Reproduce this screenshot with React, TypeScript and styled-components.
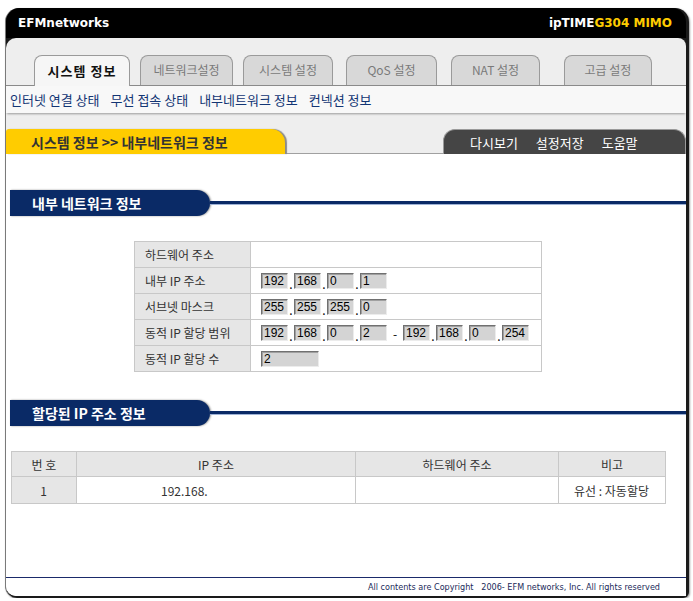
import React from "react"
import styled, { createGlobalStyle } from "styled-components"

const GlobalStyle = createGlobalStyle`
  body {
    margin: 0;
    background: #ffffff;
    font-family: "Noto Sans CJK KR", "Liberation Sans", sans-serif;
  }
`

const Frame = styled.div`
  width: 680px;
  margin: 8px 0 0 5px;
  background: #1a1a1a;
  border-left: 1px solid #7a7a7a;
  padding: 0 3px 2px 0;
  border-radius: 14px 14px 6px 12px;
  box-shadow: 1px 1px 2px #9a9a9a;
`

const Header = styled.div`
  height: 30px;
  display: flex;
  align-items: center;
  justify-content: space-between;
  padding: 0 14px 0 12px;
  background: #000;
  border-radius: 14px 14px 0 0;
  font-family: "DejaVu Sans", Verdana, sans-serif;
  font-weight: bold;
  font-size: 12px;
  color: #fff;
`

const Model = styled.span`
  color: #ffcc00;
`

const Inner = styled.div`
  background: #eeeeee;
  border-radius: 10px 8px 0 10px;
  overflow: hidden;
`

const TabRow = styled.div`
  height: 47px;
  display: flex;
  align-items: flex-end;
  position: relative;
  z-index: 1;
`

const Tab = styled.div<{ $w: number; $gap: number; $active?: boolean }>`
  width: ${(p) => p.$w}px;
  margin-left: ${(p) => p.$gap}px;
  height: ${(p) => (p.$active ? 31 : 30)}px;
  margin-bottom: ${(p) => (p.$active ? -1 : 0)}px;
  box-sizing: border-box;
  border: 1px solid #9a9a9a;
  border-bottom: none;
  border-radius: 8px 8px 0 0;
  background: ${(p) => (p.$active ? "#f6f6f6" : "#d8d8d8")};
  color: ${(p) => (p.$active ? "#111" : "#7a7a7a")};
  font-weight: ${(p) => (p.$active ? "bold" : "normal")};
  font-size: ${(p) => (p.$active ? 13 : 12)}px;
  letter-spacing: ${(p) => (p.$active ? 1 : 0)}px;
  display: flex;
  align-items: center;
  justify-content: center;
  padding-bottom: 2px;
`

const SubBar = styled.div`
  height: 28px;
  box-sizing: border-box;
  background: #f8f8f8;
  border-top: 1px solid #8a8a8a;
  box-shadow: 0 2px 2px -1px #9a9a9a;
  display: flex;
  align-items: center;
  gap: 11px;
  padding-left: 4px;
`

const SubLink = styled.span`
  color: #123574;
  font-size: 13px;
`

const TitleRow = styled.div`
  margin-top: 15px;
  height: 25px;
  display: flex;
  align-items: flex-end;
  justify-content: space-between;
  border-bottom: 1px solid #a0a0a0;
`

const CrumbTab = styled.div`
  width: 279px;
  height: 25px;
  margin-bottom: -1px;
  box-sizing: border-box;
  background: #ffcc00;
  border-radius: 3px 14px 0 0;
  box-shadow: 2px 0 1px #8a8a8a;
  padding-left: 25px;
  display: flex;
  align-items: center;
  font-weight: bold;
  font-size: 14px;
  color: #333;
`

const ToolTab = styled.div`
  width: 243px;
  height: 25px;
  margin-bottom: -1px;
  box-sizing: border-box;
  background: #454545;
  border: 1px solid #9a9a9a;
  border-bottom: none;
  border-radius: 12px 12px 0 0;
  padding-left: 26px;
  display: flex;
  align-items: center;
  gap: 18px;
  color: #fff;
  font-size: 13px;
`

const Content = styled.div`
  background: #fff;
  height: 442px;
  display: flex;
  flex-direction: column;
`

const SectionHead = styled.div<{ $top: number }>`
  margin-top: ${(p) => p.$top}px;
  margin-left: 4px;
  display: flex;
  align-items: center;
`

const Pill = styled.div`
  width: 200px;
  height: 26px;
  box-sizing: border-box;
  background: #0a2a66;
  border-radius: 0 13px 13px 0;
  box-shadow: 1px 0 2px rgba(0, 0, 0, 0.45);
  padding-left: 22px;
  display: flex;
  align-items: center;
  color: #fff;
  font-weight: bold;
  font-size: 14px;
`

const Rule = styled.div`
  flex: 1;
  height: 3px;
  background: #0a2a66;
  border-bottom: 1px solid #9fb3d6;
`

const InfoTable = styled.table`
  margin: 25px 0 0 128px;
  width: 408px;
  border-collapse: collapse;
  font-size: 12px;
  color: #333;
  td {
    border: 1px solid #c8c8c8;
    height: 25px;
    padding: 0 0 0 10px;
  }
`

const LabelCell = styled.td`
  width: 105px;
  background: #e6e6e6;
`

const IpRow = styled.div`
  display: flex;
  align-items: flex-end;
`

const IpBox = styled.input<{ $w?: number }>`
  width: ${(p) => p.$w ?? 27}px;
  height: 16px;
  box-sizing: border-box;
  margin: 0;
  padding: 0 0 0 2px;
  background: #d4d4d4;
  border: 1px solid;
  border-color: #707070 #ececec #ececec #707070;
  box-shadow: inset 1px 1px 0 #a0a0a0;
  font-family: "Liberation Sans", sans-serif;
  font-size: 12px;
  line-height: 14px;
  color: #000;
  outline: none;
`

const Dot = styled.span`
  width: 6px;
  text-align: center;
  font-size: 12px;
  line-height: 10px;
  color: #000;
`

const Dash = styled.span`
  width: 16px;
  text-align: center;
  font-size: 12px;
  line-height: 14px;
  color: #000;
`

const ListTable = styled.table`
  margin: 25px 0 0 5px;
  width: 654px;
  table-layout: fixed;
  border-collapse: collapse;
  font-size: 12px;
  color: #333;
  th {
    background: #e6e6e6;
    font-weight: normal;
    height: 22px;
    border: 1px solid #c8c8c8;
  }
  td {
    height: 24px;
    border: 1px solid #c8c8c8;
  }
`

const Col = styled.col<{ $w: number }>`
  width: ${(p) => p.$w}px;
`

const Cell = styled.td<{ $align?: string; $pad?: number; $shade?: boolean }>`
  text-align: ${(p) => p.$align ?? "center"};
  padding-left: ${(p) => p.$pad ?? 0}px;
  background: ${(p) => (p.$shade ? "#e6e6e6" : "#fff")};
`

const Footer = styled.div`
  margin-top: auto;
  height: 18px;
  border-top: 1px solid #1a2a6a;
  display: flex;
  align-items: center;
  justify-content: flex-end;
  padding-right: 26px;
  font-family: "DejaVu Sans", Verdana, sans-serif;
  font-size: 8.1px;
  color: #1a2a5a;
  white-space: pre;
`

const tabs = [
  { label: "시스템 정보", w: 96, gap: 28, active: true },
  { label: "네트워크설정", w: 93, gap: 10 },
  { label: "시스템 설정", w: 90, gap: 10 },
  { label: "QoS 설정", w: 91, gap: 13 },
  { label: "NAT 설정", w: 89, gap: 14 },
  { label: "고급 설정", w: 88, gap: 24 },
]

const subLinks = ["인터넷 연결 상태", "무선 접속 상태", "내부네트워크 정보", "컨넥션 정보"]

const Ip = ({ parts }: { parts: string[] }) => (
  <>
    {parts.map((v, i) => (
      <React.Fragment key={i}>
        {i > 0 && <Dot>.</Dot>}
        <IpBox readOnly value={v} />
      </React.Fragment>
    ))}
  </>
)

export default function App() {
  return (
    <>
      <GlobalStyle />
      <Frame>
        <Header>
          <span>EFMnetworks</span>
          <span>
            ipTIME<Model>G304 MIMO</Model>
          </span>
        </Header>
        <Inner>
          <TabRow>
            {tabs.map((t) => (
              <Tab key={t.label} $w={t.w} $gap={t.gap} $active={t.active}>
                {t.label}
              </Tab>
            ))}
          </TabRow>
          <SubBar>
            {subLinks.map((l) => (
              <SubLink key={l}>{l}</SubLink>
            ))}
          </SubBar>
          <TitleRow>
            <CrumbTab>시스템 정보 &gt;&gt; 내부네트워크 정보</CrumbTab>
            <ToolTab>
              <span>다시보기</span>
              <span>설정저장</span>
              <span>도움말</span>
            </ToolTab>
          </TitleRow>
          <Content>
            <SectionHead $top={36}>
              <Pill>내부 네트워크 정보</Pill>
              <Rule />
            </SectionHead>
            <InfoTable>
              <tbody>
                <tr>
                  <LabelCell>하드웨어 주소</LabelCell>
                  <td></td>
                </tr>
                <tr>
                  <LabelCell>내부 IP 주소</LabelCell>
                  <td>
                    <IpRow>
                      <Ip parts={["192", "168", "0", "1"]} />
                    </IpRow>
                  </td>
                </tr>
                <tr>
                  <LabelCell>서브넷 마스크</LabelCell>
                  <td>
                    <IpRow>
                      <Ip parts={["255", "255", "255", "0"]} />
                    </IpRow>
                  </td>
                </tr>
                <tr>
                  <LabelCell>동적 IP 할당 범위</LabelCell>
                  <td>
                    <IpRow>
                      <Ip parts={["192", "168", "0", "2"]} />
                      <Dash>-</Dash>
                      <Ip parts={["192", "168", "0", "254"]} />
                    </IpRow>
                  </td>
                </tr>
                <tr>
                  <LabelCell>동적 IP 할당 수</LabelCell>
                  <td>
                    <IpRow>
                      <IpBox $w={58} readOnly value="2" />
                    </IpRow>
                  </td>
                </tr>
              </tbody>
            </InfoTable>
            <SectionHead $top={28}>
              <Pill>할당된 IP 주소 정보</Pill>
              <Rule />
            </SectionHead>
            <ListTable>
              <colgroup>
                <Col $w={65} />
                <Col $w={279} />
                <Col $w={203} />
                <Col $w={107} />
              </colgroup>
              <thead>
                <tr>
                  <th>번 호</th>
                  <th>IP 주소</th>
                  <th>하드웨어 주소</th>
                  <th>비고</th>
                </tr>
              </thead>
              <tbody>
                <tr>
                  <Cell $shade>1</Cell>
                  <Cell $align="left" $pad={84}>192.168.</Cell>
                  <Cell></Cell>
                  <Cell>유선 : 자동할당</Cell>
                </tr>
              </tbody>
            </ListTable>
            <Footer>All contents are Copyright   2006- EFM networks, Inc. All rights reserved</Footer>
          </Content>
        </Inner>
      </Frame>
    </>
  )
}
